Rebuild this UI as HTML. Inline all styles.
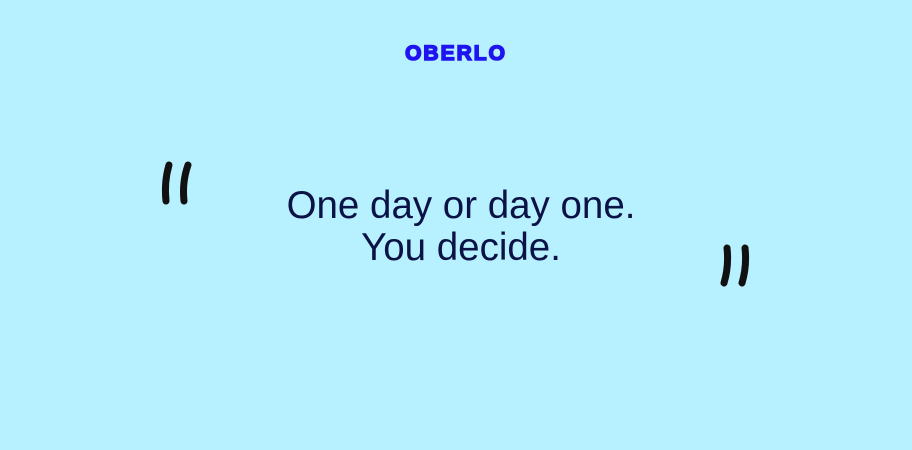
<!DOCTYPE html>
<html><head><style>
body{margin:0;width:912px;height:450px;background:#b7f0fe;position:relative;overflow:hidden;font-family:"Liberation Sans",sans-serif}
.logo{position:absolute;left:0;width:912px;top:42px;text-align:center;font-weight:900;font-size:21px;color:#1f14f0;letter-spacing:2px;-webkit-text-stroke:1.6px #1f14f0}
.q{position:absolute;left:5px;width:912px;text-align:center;color:#0b1246;font-size:38.5px;line-height:42px;top:185px}
</style></head><body>
<div class="logo">OBERLO</div>
<div class="q">One day or day one.<br>You decide.</div>
<svg style="position:absolute;left:0;top:0" width="912" height="450">
<g stroke="#111" stroke-width="7" stroke-linecap="round" fill="none">
<path d="M169 165 Q164 182 166 201"/>
<path d="M188 165 Q182 182 184 201"/>
<path d="M727 248 Q729 266 724 283"/>
<path d="M745 248 Q747 266 742 283"/>
</g></svg>
</body></html>
